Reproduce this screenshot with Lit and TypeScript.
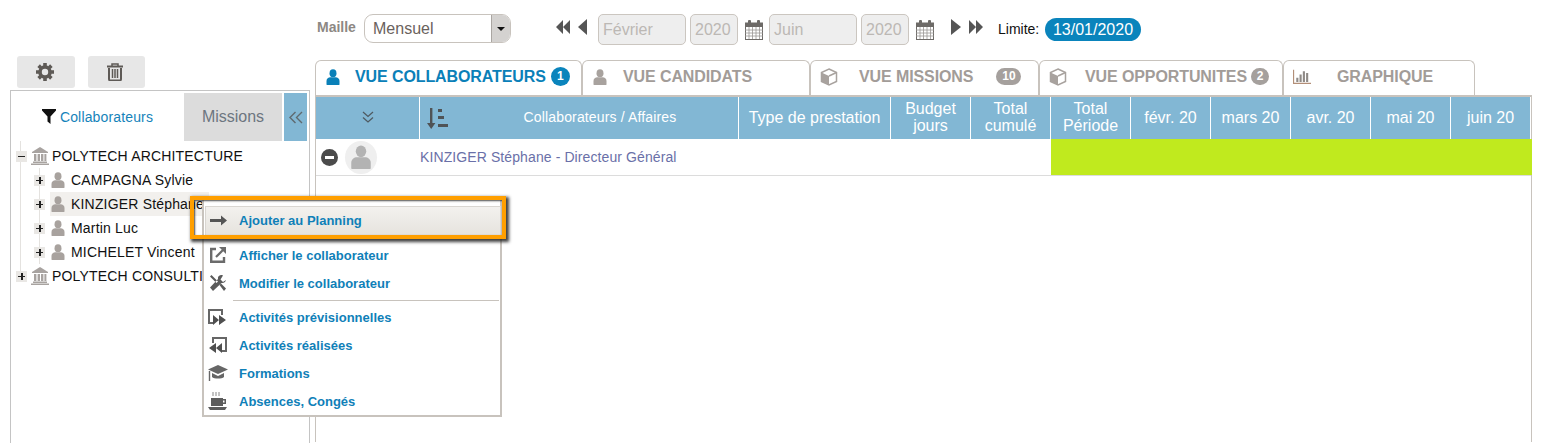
import { LitElement, css, html } from "lit";
import { customElement } from "lit/decorators.js";

/* icons */

const person = (c: string, s = 16) => html`<svg width=${s} height=${s} viewBox="0 0 16 16">
  <ellipse cx="8" cy="4.2" rx="3.5" ry="3.9" fill=${c}></ellipse>
  <path d="M1.5 15.5V12c0-2.6 2-3.8 3.8-3.8h5.4c1.800 0 3.800 1.200 3.800 3.800v3.500c0 .3-.2.5-.5.5H2c-.3 0-.5-.2-.5-.5z" fill=${c}></path>
</svg>`;

const bank = html`<svg width="18" height="18" viewBox="0 0 18 18" fill="#a8a3a0">
  <path d="M9 0l8 5v1H1V5z"></path>
  <path d="M3 7h2.400v7H3zM6.600 7H9v7H6.600zM10 7h2.400v7H10zM13.400 7h2v7h-2zM2 14.500h14V16H2zM0 16.500h18V18H0z"></path>
</svg>`;

const cube = html`<svg width="18" height="18" viewBox="0 0 18 18">
  <path d="M9 1l7.500 3.500v9L9 17 1.500 13.500v-9z" fill="#fff" stroke="#a8a29e" stroke-width="1.500"></path>
  <path d="M1.500 4.500L9 8v9L1.500 13.500z" fill="#a8a29e"></path>
  <path d="M9 8l7.500-3.500" stroke="#a8a29e" stroke-width="1.500" fill="none"></path>
</svg>`;

const chart = html`<svg width="22" height="18" viewBox="0 0 22 18" fill="#8f8a86">
  <path d="M0 0h1.400v16H22v1.500H0z" fill="#b38f78"></path>
  <path d="M4 10h2.600v5H4zM8 6h2.600v9H8zM12 2h2.600v13H12zM16 4h2.600v11H16z"></path>
</svg>`;

const calendar = html`<svg width="18" height="20" viewBox="0 0 18 20">
  <rect x=".5" y="3" width="17" height="16.500" fill="#fff" stroke="#6d6a67"></rect>
  <rect x="0" y="3" width="18" height="4" fill="#6d6a67"></rect>
  <rect x="3" y="0" width="3" height="5" rx="1" fill="#6d6a67"></rect>
  <rect x="12" y="0" width="3" height="5" rx="1" fill="#6d6a67"></rect>
  <path d="M0 10h18M0 13h18M0 16h18M4 7v12M7.500 7v12M11 7v12M14.500 7v12" stroke="#9b9794" stroke-width=".8"></path>
</svg>`;

const arrowsLeft = html`<svg width="14" height="14" viewBox="0 0 14 14" fill="#555"><path d="M7 0v14L0 7zM14 0v14L7 7z"></path></svg>`;
const arrowLeft = html`<svg width="9" height="16" viewBox="0 0 9 16" fill="#555"><path d="M9 0v16L0 8z"></path></svg>`;
const arrowRight = html`<svg width="10" height="16" viewBox="0 0 10 16" fill="#555"><path d="M0 0v16l10-8z"></path></svg>`;
const arrowsRight = html`<svg width="14" height="14" viewBox="0 0 14 14" fill="#555"><path d="M0 0v14l7-7zM7 0v14l7-7z"></path></svg>`;

const gear = html`<svg width="18" height="18" viewBox="0 0 18 18">
  <circle cx="9" cy="9" r="5" fill="none" stroke="#5e5a56" stroke-width="3.600"></circle>
  <path d="M7.200 0h3.600v3H7.200zM7.200 15h3.600v3H7.200zM0 7.200h3v3.600H0zM15 7.200h3v3.600h-3z" fill="#5e5a56"></path>
  <g transform="rotate(45 9 9)"><path d="M7.200 0h3.600v3H7.200zM7.200 15h3.600v3H7.200zM0 7.200h3v3.600H0zM15 7.200h3v3.600h-3z" fill="#5e5a56"></path></g>
</svg>`;

const trash = html`<svg width="16" height="18" viewBox="0 0 16 18" fill="none" stroke="#5e5a56">
  <path d="M0 3.500h16" stroke-width="2"></path>
  <path d="M5 3V1h6v2" stroke-width="1.500"></path>
  <path d="M2 5v11c0 1 .5 1.500 1.500 1.500h9c1 0 1.500-.5 1.500-1.500V5" stroke-width="2"></path>
  <path d="M5.500 6v9M8 6v9M10.500 6v9" stroke-width="1.500"></path>
</svg>`;

const funnel = html`<svg width="14" height="15" viewBox="0 0 14 15"><path d="M0 0h14v1.500L8.500 7.500V15L5.500 12.500v-5L0 1.500z" fill="#111"></path></svg>`;

const chevronsLeft = html`<svg width="14" height="13" viewBox="0 0 14 13" fill="none" stroke="#5f6a70" stroke-width="1.400"><path d="M6.500 1L1 6.500 6.500 12M13 1L7.500 6.500 13 12"></path></svg>`;
const chevronsDown = html`<svg width="12" height="12" viewBox="0 0 12 12" fill="none" stroke="#4f5a61" stroke-width="1.300"><path d="M1 1l5 4.500L11 1M1 6.500L6 11l5-4.500"></path></svg>`;

const sortIcon = html`<svg width="21" height="21" viewBox="0 0 21 21" fill="#4f5356">
  <path d="M3 0h2.400v15H8.400l-4.200 6L0 15h3z"></path>
  <path d="M11 1h4v3h-4zM11 8h6v3h-6zM11 16h10v3H11z"></path>
</svg>`;

const arrowMenu = html`<svg width="17" height="11" viewBox="0 0 17 11" fill="#555"><path d="M0 4h11V.5l6 5-6 5V7H0z"></path></svg>`;
const openIcon = html`<svg width="16" height="16" viewBox="0 0 16 16" fill="none" stroke="#6b6b6b" stroke-width="2.400"><path d="M6 2H1.200v12.800H14V10"></path><path d="M6 10l7-7" stroke-width="2.200"></path><path d="M9 0h7v7z" fill="#6b6b6b" stroke="none"></path></svg>`;
const toolsIcon = html`<svg width="16" height="16" viewBox="0 0 16 16" fill="#5a5a5a"><path d="M1.500 0L8 6.500 6.500 8 0 1.500zM11 0c-2 .2-3.500 2-3 4L0 12.500 3 16l8.500-8c2 .5 4-1 4.500-3L13 7l-2.500-2.500L13 .5c-.6-.4-1.300-.5-2-.5z"></path><path d="M9.500 10l1.500-1.500 5 5L14 16z"></path></svg>`;
const nextIcon = html`<svg width="19" height="17" viewBox="0 0 19 17"><path d="M5 14H1V1h13v5" fill="none" stroke="#666" stroke-width="2"></path><path d="M5 6v10l6-5zM11 6v10l7-5z" fill="#4f4f4f"></path></svg>`;
const prevIcon = html`<svg width="19" height="17" viewBox="0 0 19 17"><path d="M14 14h4V1H5v5" fill="none" stroke="#666" stroke-width="2"></path><path d="M14 6v10l-6-5zM8 6v10l-7-5z" fill="#4f4f4f"></path></svg>`;
const capIcon = html`<svg width="20" height="17" viewBox="0 0 20 17" fill="#666"><path d="M10 0l10 4.500L10 9 0 4.500z"></path><path d="M4 8l6 3 6-3v4c-2 2-10 2-12 0zM.8 6h1.400v10H.8z"></path></svg>`;
const cupIcon = html`<svg width="20" height="19" viewBox="0 0 20 19" fill="#5c5c5c"><path d="M5 0v4M8 0v4M11 0v4" stroke="#888" stroke-width="1"></path><path d="M3 6h12v1h3v5h-3v2H3zM15 8.500v2h1.500v-2z" fill-rule="evenodd"></path><path d="M0 15h19l-2 3H2z"></path></svg>`;

const menuItems = [
  [openIcon, "Afficher le collaborateur"],
  [toolsIcon, "Modifier le collaborateur"],
  null,
  [nextIcon, "Activités prévisionnelles"],
  [prevIcon, "Activités réalisées"],
  [capIcon, "Formations"],
  [cupIcon, "Absences, Congés"],
];

const tree = [
  { label: "CAMPAGNA Sylvie", active: false },
  { label: "KINZIGER Stéphane", active: true },
  { label: "Martin Luc", active: false },
  { label: "MICHELET Vincent", active: false },
];

const months = ["févr. 20", "mars 20", "avr. 20", "mai 20", "juin 20"];

@customElement("app-root")
export class AppRoot extends LitElement {
  static styles = css`
    :host {
      display: block;
      position: relative;
      height: 443px;
      overflow: hidden;
      background: #fff;
      font-family: "Liberation Sans", Arial, sans-serif;
      color: #111;
    }

    /* toolbar */
    .toolbar {
      display: flex;
      align-items: center;
      height: 56px;
      padding-left: 317px;
      padding-top: 2px;
      box-sizing: border-box;
    }
    .maille {
      font-size: 14px;
      font-weight: bold;
      color: #8d8883;
      width: 47px;
      margin-top: -5px;
    }
    .select {
      display: flex;
      width: 147px;
      height: 29px;
      box-sizing: border-box;
      border: 1px solid #c8c3bd;
      border-radius: 9px;
      overflow: hidden;
      margin-top: -1px;
    }
    .select span {
      flex: 1;
      padding-left: 8px;
      font-size: 16px;
      line-height: 27px;
      color: #6a625d;
    }
    .select i {
      width: 18px;
      background: #d4d2d0;
      border-left: 1px solid #aaa6a2;
      display: flex;
      align-items: center;
      justify-content: center;
    }
    .select i::after {
      content: "";
      border: 4px solid transparent;
      border-top: 4px solid #111;
      border-bottom: 0;
    }
    .nav {
      display: flex;
      align-items: center;
      gap: 8px;
    }
    .nav.back {
      margin-left: 45px;
      margin-right: 11px;
      margin-top: -5px;
    }
    .nav.fwd {
      margin-left: 17px;
      margin-top: -5px;
    }
    .field {
      box-sizing: border-box;
      height: 31px;
      border: 1px solid #cbc6c0;
      border-radius: 5px;
      background: #eeeeee;
      color: #bcb8b4;
      font-size: 16px;
      line-height: 29px;
      padding-left: 4px;
      margin-right: 4px;
    }
    .field.month {
      width: 88px;
    }
    .field.year {
      width: 48px;
      margin-right: 7px;
    }
    .cal {
      display: flex;
      margin-right: 6px;
      margin-top: 2px;
    }
    .cal.last {
      margin-right: 0;
    }
    .limite {
      font-size: 14px;
      margin-left: 15px;
      width: 47px;
    }
    .pill {
      width: 96px;
      height: 23px;
      border-radius: 12px;
      background: #0a84bc;
      color: #fff;
      font-size: 16px;
      line-height: 23px;
      text-align: center;
    }

    /* main */
    .main {
      display: grid;
      grid-template-columns: 315px 1217px;
    }
    .side {
      display: flex;
      flex-direction: column;
    }
    .tools {
      display: flex;
      gap: 13px;
      padding-left: 17px;
      height: 32px;
    }
    .tools button {
      width: 58px;
      height: 32px;
      border: 0;
      padding: 0 2px 0 0;
      border-radius: 3px;
      background: #e7e7e7;
      display: flex;
      align-items: center;
      justify-content: center;
    }
    .tools button + button {
      width: 57px;
      padding-right: 4px;
    }
    .panel {
      margin-left: 10px;
      width: 300px;
      height: 360px;
      box-sizing: border-box;
      border: 1px solid #c4c4c4;
      border-bottom: 0;
      margin-top: 2px;
    }
    .panel-tabs {
      display: flex;
      height: 48px;
      margin-top: 2px;
    }
    .panel-tab {
      width: 173px;
      display: flex;
      align-items: center;
      justify-content: center;
      gap: 4px;
      box-sizing: border-box;
      color: #1583ba;
      font-size: 14px;
      letter-spacing: 0.15px;
    }
    .panel-tab svg {
      margin-top: -1px;
    }
    .panel-tab.off {
      width: 98px;
      background: #dcdcdc;
      color: #6d7680;
      font-size: 16px;
      letter-spacing: 0;
    }
    .collapse {
      width: 23px;
      margin-left: 2px;
      background: #82b7d4;
      display: flex;
      align-items: center;
      justify-content: center;
    }
    .tree {
      padding: 3px 0 0 5px;
      font-size: 14px;
      letter-spacing: 0.18px;
      background: linear-gradient(#e4e2df, #e4e2df) 9px 0 / 1px 130px no-repeat;
    }
    .node {
      display: flex;
      align-items: center;
      height: 24px;
      white-space: nowrap;
    }
    .node .box {
      width: 11px;
      height: 11px;
      box-sizing: border-box;
      background: #e9e7e4;
      position: relative;
      flex: none;
      margin-right: 4px;
    }
    .box::before {
      content: "";
      position: absolute;
      left: 2px;
      top: 5px;
      width: 7px;
      height: 1.500px;
      background: #222;
    }
    .box.plus::after {
      content: "";
      position: absolute;
      left: 5px;
      top: 2px;
      width: 1.500px;
      height: 7px;
      background: #222;
    }
    .node .glyph {
      display: flex;
      width: 18px;
      margin-right: 3px;
    }
    .child {
      padding-left: 18px;
      position: relative;
    }
    .child .box {
      margin-right: 5px;
    }
    .child .glyph {
      width: 16px;
      margin-right: 5px;
    }
    .label {
      display: flex;
      align-items: center;
      height: 24px;
      padding-right: 5px;
    }
    .label.active {
      background: #f2f0ed;
    }
    .children {
      background: linear-gradient(#e4e2df, #e4e2df) 23px 0 / 1px 100% no-repeat;
    }

    /* tabs */
    .content {
      display: flex;
      flex-direction: column;
    }
    .tabs {
      display: flex;
      height: 36px;
      margin-top: 4px;
    }
    .tab {
      box-sizing: border-box;
      height: 36px;
      border: 1px solid #c8c3bd;
      border-bottom: 0;
      border-radius: 6px 6px 0 0;
      display: flex;
      align-items: center;
      font-size: 16px;
      font-weight: bold;
      letter-spacing: -0.1px;
      color: #a29c98;
      position: relative;
      padding-bottom: 4px;
    }
    .tab .ico {
      display: flex;
      width: 18px;
      margin-left: 9px;
    }
    .tab.on {
      color: #0a80b8;
    }
    .badge {
      background: #a5a09d;
      color: #fff;
      font-size: 12px;
      letter-spacing: 0;
      height: 17px;
      line-height: 17px;
      border-radius: 9px;
      text-align: center;
      min-width: 18px;
    }
    .badge.wide {
      min-width: 25px;
    }
    .tab.on .badge {
      background: #0a84bc;
      min-width: 19px;
      height: 19px;
      line-height: 19px;
      border-radius: 10px;
    }

    /* table */
    .frame {
      box-sizing: border-box;
      height: 347px;
      border: 1px solid #c8c3bd;
      border-width: 2px 1px 0 1px;
      margin-top: -1px;
    }
    .head,
    .row {
      display: grid;
      grid-template-columns: 103px 318px 151px repeat(8, 79px);
      column-gap: 1px;
    }
    .head {
      height: 42px;
      width: 1214px;
    }
    .head > div {
      background: #82b7d4;
      color: #fff;
      font-size: 16px;
      line-height: 17px;
      text-align: center;
      display: flex;
      align-items: center;
      justify-content: center;
      padding-bottom: 2px;
      box-sizing: border-box;
    }
    .head .collab {
      font-size: 14px;
      letter-spacing: 0.15px;
      position: relative;
      padding-left: 42px;
    }
    .sort {
      position: absolute;
      left: 7px;
      top: 11px;
      display: flex;
    }
    .row {
      height: 37px;
      box-sizing: border-box;
      border-bottom: 1px solid #dcdcdc;
      font-size: 14px;
      letter-spacing: 0.1px;
      color: #6a70a8;
    }
    .row > .who {
      display: flex;
      align-items: center;
      padding-left: 5px;
      gap: 7px;
    }
    .minus {
      width: 17px;
      height: 17px;
      border-radius: 50%;
      background: #4b4b4b;
      position: relative;
      flex: none;
    }
    .minus::after {
      content: "";
      position: absolute;
      left: 4px;
      top: 7px;
      width: 9px;
      height: 3px;
      background: #fff;
    }
    .avatar {
      width: 32px;
      height: 33px;
      border-radius: 50%;
      background: #efefef;
      display: flex;
      align-items: center;
      justify-content: center;
    }
    .row .name {
      display: flex;
      align-items: center;
      white-space: nowrap;
    }
    .row .green {
      grid-column: 6 / -1;
      background: #c0ea1e;
      margin-right: -2px;
    }

    /* context menu */
    .menu {
      position: absolute;
      left: 202px;
      top: 197px;
      width: 300px;
      height: 220px;
      box-sizing: border-box;
      border: 2px solid #c8c3bd;
      border-top-width: 1px;
      background: #fff;
      padding: 8px 0 0 0;
      font-size: 13px;
      font-weight: bold;
      color: #0f80b8;
    }
    .item {
      display: flex;
      align-items: center;
      height: 28px;
    }
    .item .ico {
      width: 35px;
      display: flex;
      justify-content: center;
      padding-right: 8px;
      box-sizing: border-box;
    }
    .item.top {
      height: 30px;
      margin: 0 0 5px 1px;
      padding-bottom: 2px;
      box-sizing: border-box;
      width: 296px;
      border: 1px solid #d9d6d1;
      background: linear-gradient(#f3f1ee, #e6e3de);
    }
    .item.top .ico {
      width: 33px;
    }
    .sep {
      height: 1px;
      margin: 3px 1px 2px 29px;
      background: #c8c3bd;
    }
    .focus {
      position: absolute;
      left: 190px;
      top: 196px;
      width: 316px;
      height: 43px;
      box-sizing: border-box;
      border: 4px solid #ff9f00;
      box-shadow: 2px 2px 3px 1px rgba(30, 30, 30, 0.85),
        inset 1px 1px 2px rgba(30, 30, 30, 0.8);
    }
  `;

  private renderTab(
    label: string,
    width: number,
    textLeft: number,
    icon: unknown,
    badge = "",
    on = false,
    badgeLeft = 4
  ) {
    return html`<div class="tab ${on ? "on" : ""}" style="width:${width}px">
      <span class="ico">${icon}</span>
      <span style="margin-left:${textLeft}px">${label}</span>
      ${badge
        ? html`<span
            class="badge ${badge.length > 1 ? "wide" : ""}"
            style="margin-left:${badgeLeft}px"
            >${badge}</span
          >`
        : ""}
    </div>`;
  }

  render() {
    return html`
      <div class="toolbar">
        <span class="maille">Maille</span>
        <div class="select"><span>Mensuel</span><i></i></div>
        <div class="nav back">${arrowsLeft}${arrowLeft}</div>
        <div class="field month">Février</div>
        <div class="field year">2020</div>
        <span class="cal">${calendar}</span>
        <div class="field month">Juin</div>
        <div class="field year">2020</div>
        <span class="cal last">${calendar}</span>
        <div class="nav fwd">${arrowRight}${arrowsRight}</div>
        <span class="limite">Limite:</span>
        <span class="pill">13/01/2020</span>
      </div>
      <div class="main">
        <div class="side">
          <div class="tools">
            <button>${gear}</button>
            <button>${trash}</button>
          </div>
          <div class="panel">
            <div class="panel-tabs">
              <div class="panel-tab">${funnel}<span>Collaborateurs</span></div>
              <div class="panel-tab off">Missions</div>
              <div class="collapse">${chevronsLeft}</div>
            </div>
            <div class="tree">
              <div class="node">
                <span class="box"></span><span class="glyph">${bank}</span>POLYTECH ARCHITECTURE
              </div>
              <div class="children">
                ${tree.map(
                  (t) => html`<div class="node child">
                    <span class="box plus"></span>
                    <span class="label ${t.active ? "active" : ""}">
                      <span class="glyph">${person("#a8a29e")}</span>${t.label}
                    </span>
                  </div>`
                )}
              </div>
              <div class="node">
                <span class="box plus"></span><span class="glyph">${bank}</span>POLYTECH CONSULTING
              </div>
            </div>
          </div>
        </div>
        <div class="content">
          <div class="tabs">
            ${this.renderTab("VUE COLLABORATEURS", 267, 12, person("#0a80b8"), "1", true, 5)}
            ${this.renderTab("VUE CANDIDATS", 228, 13, person("#a8a29e"))}
            ${this.renderTab("VUE MISSIONS", 229, 21, cube, "10", false, 23)}
            ${this.renderTab("VUE OPPORTUNITES", 244, 18, cube, "2")}
            ${this.renderTab("GRAPHIQUE", 192, 26, chart)}
          </div>
          <div class="frame">
            <div class="head">
              <div>${chevronsDown}</div>
              <div class="collab">
                <span class="sort">${sortIcon}</span>Collaborateurs / Affaires
              </div>
              <div>Type de prestation</div>
              <div>Budget<br />jours</div>
              <div>Total<br />cumulé</div>
              <div>Total<br />Période</div>
              ${months.map((m) => html`<div>${m}</div>`)}
            </div>
            <div class="row">
              <div class="who">
                <span class="minus"></span>
                <span class="avatar">${person("#b3b3b3", 24)}</span>
              </div>
              <div class="name">KINZIGER Stéphane - Directeur Général</div>
              <div></div>
              <div></div>
              <div></div>
              <div class="green"></div>
            </div>
          </div>
        </div>
      </div>
      <div class="menu">
        <div class="item top"><span class="ico">${arrowMenu}</span>Ajouter au Planning</div>
        ${menuItems.map((m) =>
          m
            ? html`<div class="item"><span class="ico">${m[0]}</span>${m[1]}</div>`
            : html`<div class="sep"></div>`
        )}
      </div>
      <div class="focus"></div>
    `;
  }
}
